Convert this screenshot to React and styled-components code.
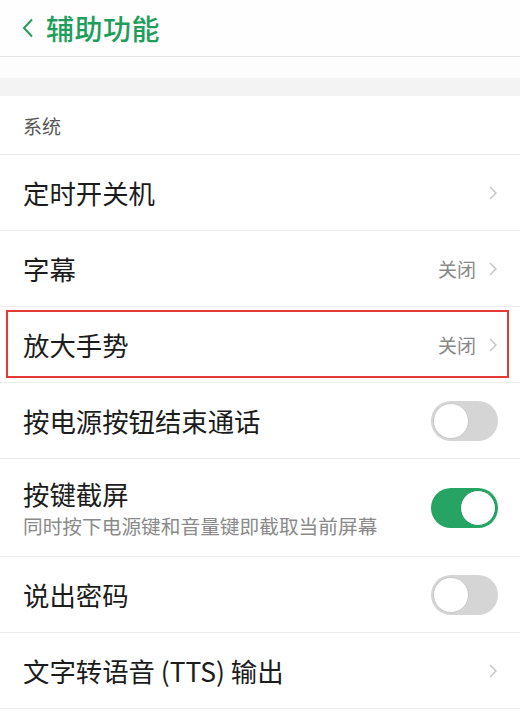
import React from 'react'
import styled, { createGlobalStyle } from 'styled-components'

const Global = createGlobalStyle`
  html, body {
    margin: 0;
    padding: 0;
    background: #fff;
    font-family: "Noto Sans CJK SC", "Noto Sans", sans-serif;
  }
`

const Page = styled.div`
  width: 520px;
  min-height: 719px;
  background: #fff;
  overflow: hidden;
`

const Header = styled.header`
  height: 56px;
  display: flex;
  align-items: center;
  padding-left: 22px;
  gap: 12px;
  border-bottom: 1px solid #e4e4e4;
  color: #1f9d5c;
  background: #fdfefd;
`

const Title = styled.h1`
  margin: 0;
  font-size: 28px;
  font-weight: 500;
  line-height: 1;
  letter-spacing: 0.5px;
`

const Spacer = styled.div`
  height: 21px;
  background: #fdfdfd;
`

const Band = styled.div`
  height: 18px;
  background: #f3f3f3;
`

const SectionLabel = styled.div`
  height: 57px;
  display: flex;
  align-items: center;
  padding: 0 23px;
  padding-top: 1px;
  font-size: 19px;
  color: #555;
  border-bottom: 1px solid #ececec;
`

const Row = styled.div`
  position: relative;
  height: ${p => (p.tall ? 97 : 75)}px;
  display: flex;
  align-items: center;
  padding: 0 22px 0 23px;
  border-bottom: 1px solid #ececec;
`

const Texts = styled.div`
  flex: 1;
  display: flex;
  flex-direction: column;
  gap: 4px;
`

const Label = styled.div`
  font-size: 26.4px;
  color: #1c1c1c;
  line-height: 1.2;
`

const Sub = styled.div`
  font-size: 19.7px;
  color: #8a8a8a;
  line-height: 1.2;
`

const Value = styled.span`
  font-size: 19px;
  color: #888;
  margin-right: 12px;
`

const Highlight = styled.div`
  position: absolute;
  left: 6px;
  right: 11px;
  top: 3px;
  bottom: 4px;
  border: 2px solid #e53935;
  pointer-events: none;
`

const Track = styled.div`
  width: 67px;
  height: 40px;
  border-radius: 20px;
  background: ${p => (p.on ? '#25a463' : '#d5d5d5')};
  position: relative;
  flex-shrink: 0;
`

const Knob = styled.div`
  position: absolute;
  top: 2px;
  left: ${p => (p.on ? '29px' : '2px')};
  width: 36px;
  height: 36px;
  border-radius: 50%;
  background: #fff;
  box-sizing: border-box;
  border: 1px solid ${p => (p.on ? '#1f9457' : '#c8c8c8')};
`

const Chevron = () => (
  <svg width="10" height="16" viewBox="0 0 10 16" fill="none">
    <path d="M2 2l6 6-6 6" stroke="#c2c2c2" strokeWidth="1.4" />
  </svg>
)

const Back = () => (
  <svg width="12" height="20" viewBox="0 0 12 20" fill="none">
    <path d="M10 1.5L2 10l8 8.5" stroke="#1f9d5c" strokeWidth="2" />
  </svg>
)

const Toggle = ({ on }) => (
  <Track on={on ? 1 : 0}>
    <Knob on={on ? 1 : 0} />
  </Track>
)

export default function App() {
  return (
    <Page>
      <Global />
      <Header>
        <Back />
        <Title>辅助功能</Title>
      </Header>
      <Spacer />
      <Band />
      <SectionLabel>系统</SectionLabel>
      <Row>
        <Texts><Label>定时开关机</Label></Texts>
        <Chevron />
      </Row>
      <Row>
        <Texts><Label>字幕</Label></Texts>
        <Value>关闭</Value>
        <Chevron />
      </Row>
      <Row>
        <Texts><Label>放大手势</Label></Texts>
        <Value>关闭</Value>
        <Chevron />
        <Highlight />
      </Row>
      <Row>
        <Texts><Label>按电源按钮结束通话</Label></Texts>
        <Toggle />
      </Row>
      <Row tall={1}>
        <Texts>
          <Label>按键截屏</Label>
          <Sub>同时按下电源键和音量键即截取当前屏幕</Sub>
        </Texts>
        <Toggle on />
      </Row>
      <Row>
        <Texts><Label>说出密码</Label></Texts>
        <Toggle />
      </Row>
      <Row>
        <Texts><Label>文字转语音 (TTS) 输出</Label></Texts>
        <Chevron />
      </Row>
    </Page>
  )
}
